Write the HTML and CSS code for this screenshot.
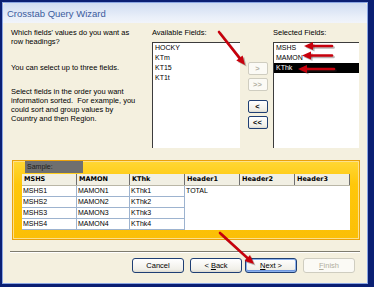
FILE: index.html
```html
<!DOCTYPE html>
<html lang="en">
<head>
    <meta charset="UTF-8">
    <meta name="viewport" content="width=device-width, initial-scale=1.0">
    <title>Crosstab Query Wizard</title>
    <link rel="stylesheet" href="styles.css">
</head>
<body>
    <div class="window">
        <div class="titlebar">Crosstab Query Wizard</div>
        <div class="dialog">
            <!-- Field picker -->
            <section class="picker">
                <div class="intro">
                    <p>Which fields' values do you want as<br>row headings?</p>
                    <p class="gap-one">You can select up to three fields.</p>
                    <p class="gap-two">Select fields in the order you want<br>information sorted.&nbsp; For example, you<br>could sort and group values by<br>Country and then Region.</p>
                </div>
                <div class="field-col">
                    <div class="label">Available Fields:</div>
                    <ul class="listbox">
                        <li>HOCKY</li>
                        <li>KTm</li>
                        <li>KT15</li>
                        <li>KT1t</li>
                    </ul>
                </div>
                <div class="move-buttons">
                    <button class="small" disabled>&gt;</button>
                    <button class="small" disabled>&gt;&gt;</button>
                    <button class="small spaced">&lt;</button>
                    <button class="small">&lt;&lt;</button>
                </div>
                <div class="field-col">
                    <div class="label">Selected Fields:</div>
                    <ul class="listbox">
                        <li>MSHS</li>
                        <li>MAMON</li>
                        <li class="active">KThk</li>
                    </ul>
                </div>
            </section>

            <!-- Sample preview -->
            <section class="sample">
                <div class="sample-tab">Sample:</div>
                <div class="sample-body">
                    <div class="grid-head">
                        <span>MSHS</span><span>MAMON</span><span>KThk</span><span>Header1</span><span>Header2</span><span>Header3</span>
                    </div>
                    <div class="grid-rows">
                        <div class="row"><span>MSHS1</span><span>MAMON1</span><span>KThk1</span><span class="plain">TOTAL</span></div>
                        <div class="row"><span>MSHS2</span><span>MAMON2</span><span>KThk2</span></div>
                        <div class="row"><span>MSHS3</span><span>MAMON3</span><span>KThk3</span></div>
                        <div class="row"><span>MSHS4</span><span>MAMON4</span><span>KThk4</span></div>
                    </div>
                </div>
            </section>

            <div class="separator"></div>

            <div class="actions">
                <button class="wide">Cancel</button>
                <button class="wide">&lt; <u>B</u>ack</button>
                <button class="wide focus"><u>N</u>ext &gt;</button>
                <button class="wide" disabled><u>F</u>inish</button>
            </div>
        </div>
    </div>

    <!-- Red callout arrows drawn over the dialog -->
    <svg class="arrows" width="374" height="287" viewBox="0 0 374 287">
        <g class="shadow" transform="translate(1.5 1.5)">
            <line x1="219" y1="32" x2="239.4" y2="57.9"/>
            <polygon points="245,65 236.3,60.4 242.6,55.4"/>
            <line x1="312" y1="46" x2="332" y2="46"/>
            <polygon points="304,46 313,42 313,50"/>
            <line x1="310" y1="55.5" x2="332" y2="55.5"/>
            <polygon points="302,55.5 311,51.5 311,59.5"/>
            <line x1="306" y1="69" x2="334" y2="69"/>
            <polygon points="298,69 307,65 307,73"/>
            <line x1="220" y1="233" x2="247.3" y2="257.9"/>
            <polygon points="254,264 244.6,260.9 250,254.9"/>
        </g>
        <g class="arrow">
            <line x1="219" y1="32" x2="239.4" y2="57.9"/>
            <polygon points="245,65 236.3,60.4 242.6,55.4"/>
            <line x1="312" y1="46" x2="332" y2="46"/>
            <polygon points="304,46 313,42 313,50"/>
            <line x1="310" y1="55.5" x2="332" y2="55.5"/>
            <polygon points="302,55.5 311,51.5 311,59.5"/>
            <line x1="306" y1="69" x2="334" y2="69"/>
            <polygon points="298,69 307,65 307,73"/>
            <line x1="220" y1="233" x2="247.3" y2="257.9"/>
            <polygon points="254,264 244.6,260.9 250,254.9"/>
        </g>
    </svg>
</body>
</html>
```

FILE: styles.css
```css
/* Wizard dialog */
body {
    margin: 0;
    width: 374px;
    height: 287px;
    position: relative;
    overflow: hidden;
    background-color: #0a1f73;
    font-family: "Liberation Sans", Arial, sans-serif;
    font-size: 7.5px;
    color: #000;
}

.window {
    margin: 2px 6px 3px 2px;
    height: 280px;
    border: 1px solid #8aa5e2;
    background-color: #f4f0df;
}

.titlebar {
    height: 20px;
    line-height: 22px;
    padding-left: 4px;
    font-size: 9.5px;
    color: #3b5b9d;
    background: linear-gradient(to bottom, #cfdcf1, #e9eff9 70%, #f1f4fa);
    border-radius: 4px 4px 0 0;
}

.dialog {
    padding: 5px 0 0 8px;
}

/* Top picker area */
.picker {
    display: grid;
    grid-template-columns: 141px 88px 33px 86px;
    height: 120px;
}

.intro p {
    margin: 0;
    line-height: 9px;
}

.intro .gap-one {
    margin-top: 17px;
}

.intro .gap-two {
    margin-top: 15px;
}

.label {
    line-height: 9px;
    height: 14px;
}

.listbox {
    list-style: none;
    margin: 0;
    padding: 0;
    height: 105px;
    background-color: #fff;
    border-left: 1px solid #3c3c3c;
    border-top: 1px solid #3c3c3c;
    font-size: 7px;
}

.listbox li {
    height: 10px;
    line-height: 10px;
    padding-left: 2px;
}

.listbox li.active {
    background-color: #000;
    color: #fff;
}

.move-buttons {
    display: flex;
    flex-direction: column;
    align-items: center;
    padding-top: 34px;
    padding-left: 2px;
    gap: 3px;
}

.move-buttons .spaced {
    margin-top: 6px;
}

button {
    font-family: "Liberation Sans", Arial, sans-serif;
    font-size: 7.5px;
    color: #000;
    padding: 0;
    border: 1px solid #1f3f74;
    border-radius: 2px;
    background: linear-gradient(to bottom, #ffffff, #f0efe8 80%, #dcdad0);
}

button:disabled {
    color: #b0ae9f;
    border-color: #cfcdc0;
    background: #fbfaf5;
}

button.small {
    width: 20px;
    height: 13px;
    font-weight: bold;
    line-height: 10px;
}

/* Sample preview */
.sample {
    margin: 12px 0 0 1px;
    width: 346px;
    height: 78px;
    border: 1px solid #eaa10b;
    background: linear-gradient(to bottom, #ffd735, #ffc70a 30%, #fbbf06);
    box-shadow: inset 0 0 0 1px #fde08a;
    position: relative;
}

.sample-tab {
    margin-left: 12px;
    width: 58px;
    height: 12px;
    line-height: 12px;
    padding-left: 2px;
    box-sizing: border-box;
    background-color: #6f6f6f;
    color: #1c1c1c;
    font-size: 7px;
}

.sample-body {
    margin: 1px 0 0 9px;
    width: 328px;
}

.grid-head,
.row {
    display: grid;
    grid-template-columns: 55px 53px 55px 55px 55px 55px;
}

.grid-head {
    height: 12px;
    background-color: #f1efe3;
    border-bottom: 1px solid #b9b6a6;
    box-sizing: border-box;
}

.grid-head span {
    font-family: "DejaVu Sans", sans-serif;
    font-weight: bold;
    font-size: 6.5px;
    line-height: 11px;
    padding-left: 2px;
    border-right: 1px solid #6e6e6e;
}

.grid-rows {
    height: 44px;
    background-color: #fff;
}

.row {
    height: 11px;
}

.row span {
    font-size: 7px;
    line-height: 10px;
    padding-left: 1px;
    border-right: 1px solid #9db3cf;
    border-bottom: 1px solid #9db3cf;
}

.row span.plain {
    border: none;
}

.separator {
    margin: 11px 0 0 -1px;
    width: 350px;
    border-top: 1px solid #7e7c6f;
    border-bottom: 1px solid #fff;
}

.actions {
    display: flex;
    margin: 5px 0 0 121px;
    gap: 6px;
}

button.wide {
    width: 52px;
    height: 15px;
    border-radius: 3px;
}

button.wide.focus {
    margin-left: -3px;
    box-shadow: inset 0 0 0 1px #8cb1ec, inset 0 -1px 0 1px #6f97df;
}

/* Callout arrows */
.arrows {
    position: absolute;
    top: 0;
    left: 0;
    pointer-events: none;
}

.arrows line {
    stroke-width: 2.6;
    stroke-linecap: round;
}

.arrow line {
    stroke: #c8000c;
}

.arrow polygon {
    fill: #c8000c;
}

.shadow line {
    stroke: rgba(60, 40, 40, 0.35);
}

.shadow polygon {
    fill: rgba(60, 40, 40, 0.35);
}
```
